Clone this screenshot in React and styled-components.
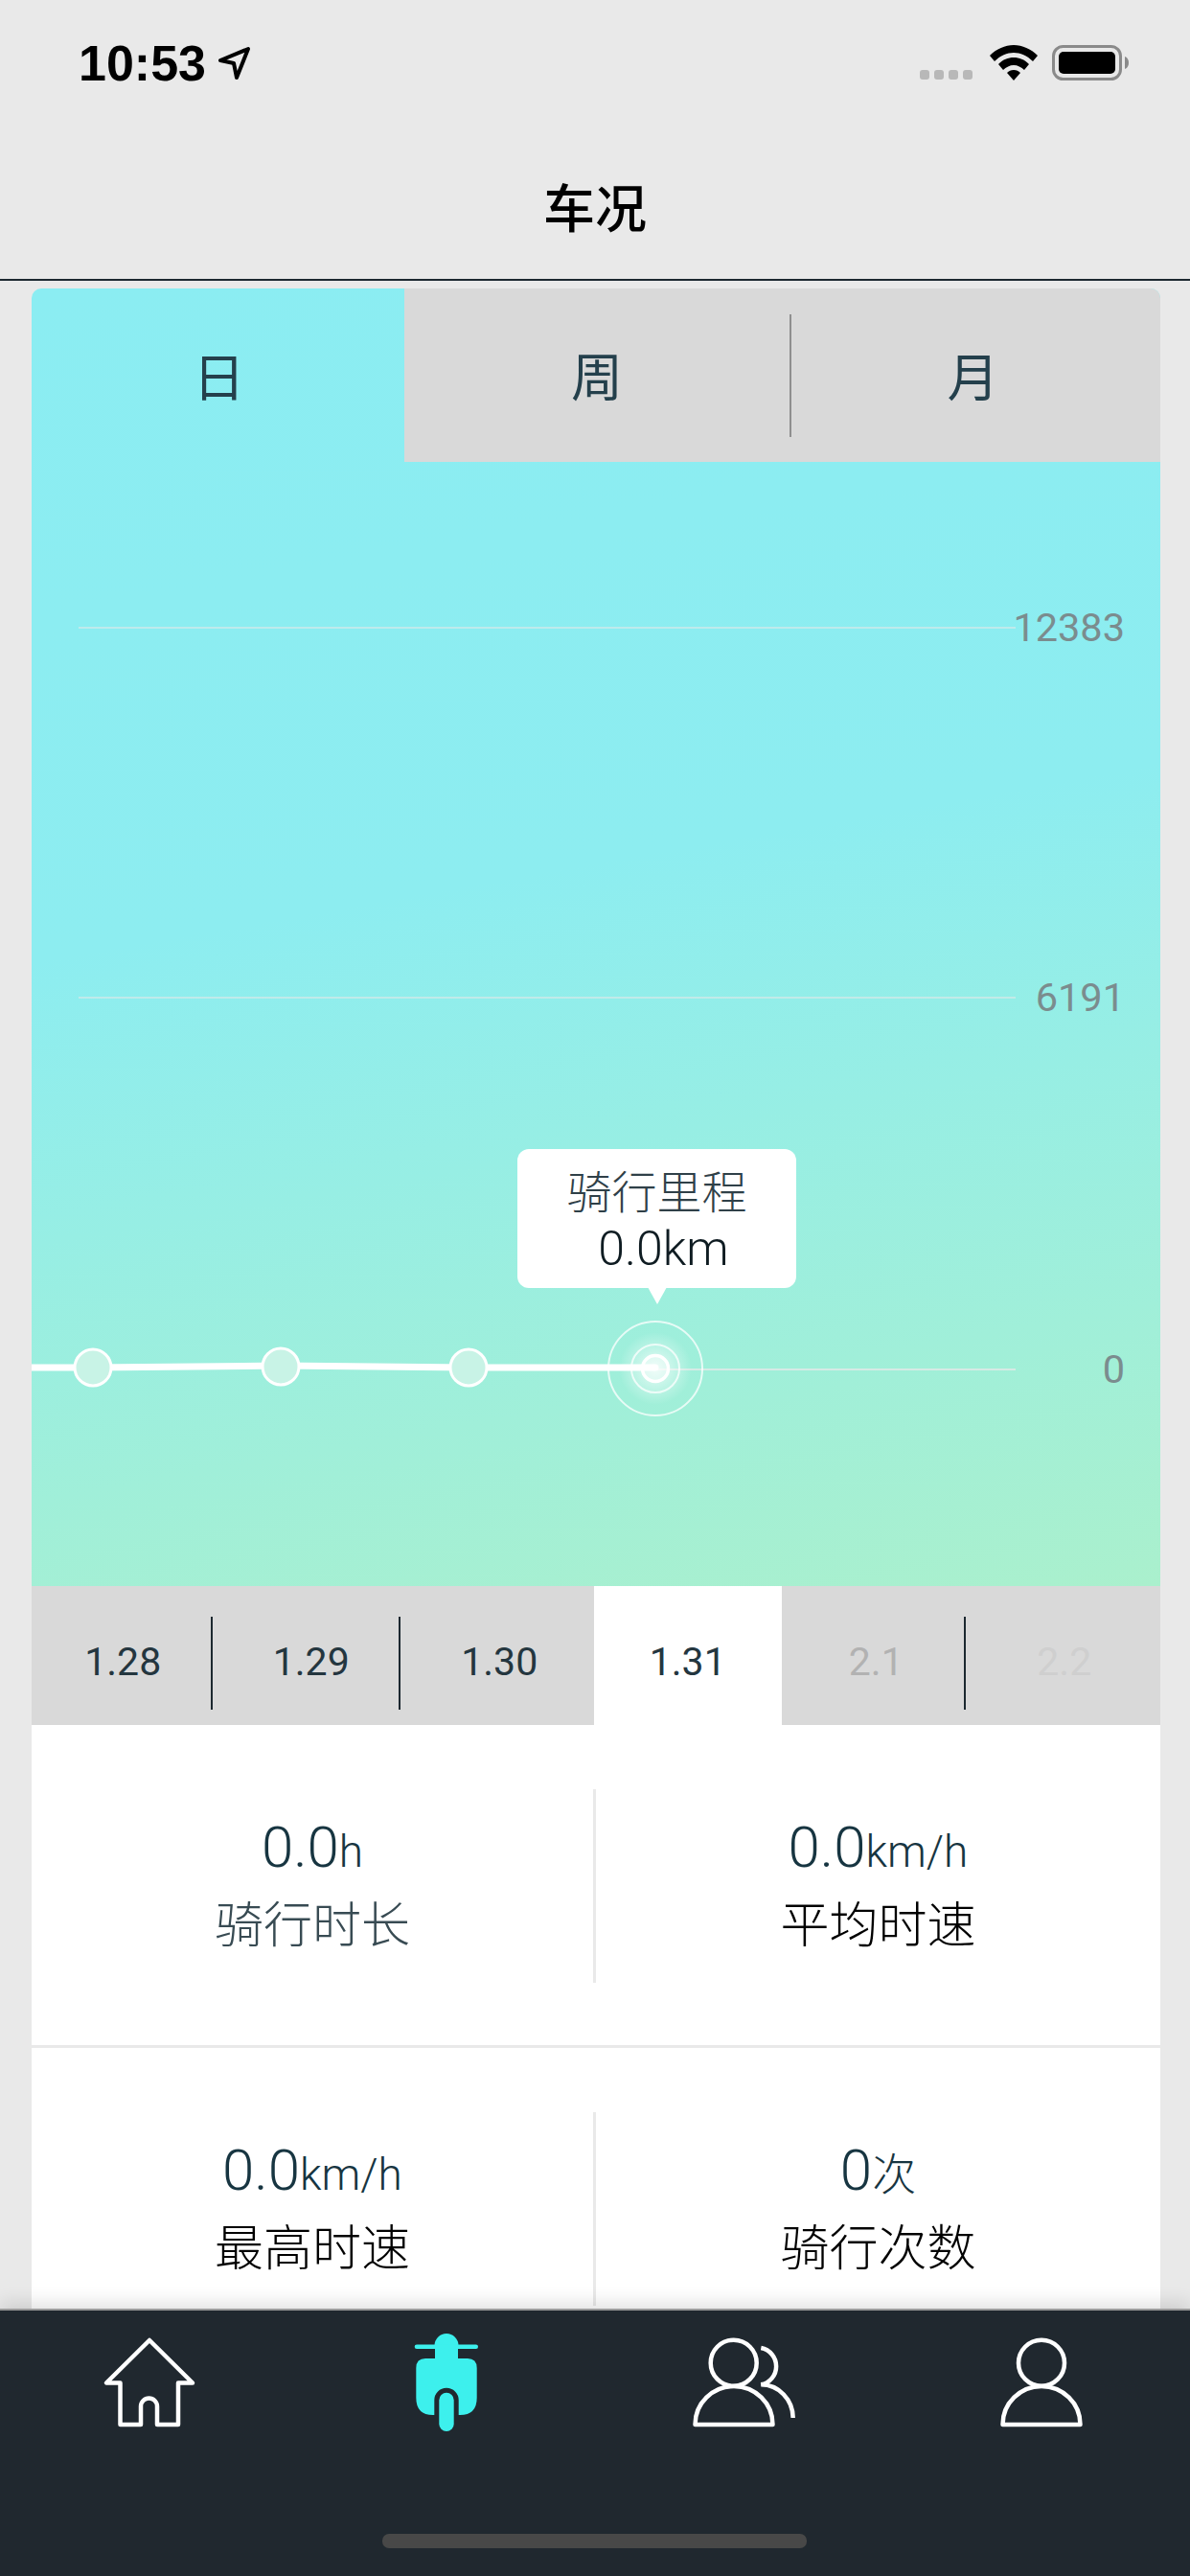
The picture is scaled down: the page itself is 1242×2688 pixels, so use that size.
import React from "react";
import styled, { createGlobalStyle } from "styled-components";

const SANS = `Roboto, "Noto Sans CJK SC", sans-serif`;

const GlobalStyle = createGlobalStyle`
  html, body {
    margin: 0;
    padding: 0;
    background: #e9e9e9;
  }
  * {
    box-sizing: border-box;
  }
`;

const dates = [
  { label: "1.28", divider: true },
  { label: "1.29", divider: true },
  { label: "1.30" },
  { label: "1.31", active: true },
  { label: "2.1", color: "#b2b2b2", divider: true },
  { label: "2.2", color: "#cfcfcf" },
];

const stats = [
  [
    { value: "0.0", unit: "h", label: "骑行时长", soft: true },
    { value: "0.0", unit: "km/h", label: "平均时速" },
  ],
  [
    { value: "0.0", unit: "km/h", label: "最高时速" },
    { value: "0", unit: "次", label: "骑行次数" },
  ],
];

const points = [
  [64, 945],
  [260, 944],
  [456, 945],
];

const App = () => {
  return (
    <Page>
      <GlobalStyle />
      <Header>
        <StatusBar>
          <Clock>
            10:53
            <svg width="34" height="36" viewBox="0 0 34 36">
              <path
                d="M2 15 L31 3 L19 33 L16 18 Z"
                fill="none"
                stroke="#000"
                strokeWidth="4"
                strokeLinejoin="round"
              />
            </svg>
          </Clock>
          <StatusIcons>
            <SignalDots>
              <i />
              <i />
              <i />
              <i />
            </SignalDots>
            <svg width="50" height="37" viewBox="0 0 50 37">
              <path d="M25 0 C34 0 43 4 50 11 L45 17 C39 11 32 8 25 8 C18 8 11 11 5 17 L0 11 C7 4 16 0 25 0 Z" />
              <path d="M25 13 C31 13 36 15 41 20 L36 26 C33 23 29 21 25 21 C21 21 17 23 14 26 L9 20 C14 15 19 13 25 13 Z" />
              <path d="M25 26 C28 26 30 27 32 29 L25 37 L18 29 C20 27 22 26 25 26 Z" />
            </svg>
            <svg width="80" height="37" viewBox="0 0 80 37">
              <rect x="1.5" y="1.5" width="70" height="34" rx="10" fill="none" stroke="#8a8a8a" strokeWidth="3" />
              <rect x="7" y="7" width="59" height="23" rx="5" fill="#000" />
              <path d="M76 12 C79 13 80 16 80 18.500 C80 21 79 24 76 25 Z" fill="#8a8a8a" />
            </svg>
          </StatusIcons>
        </StatusBar>
        <Title>车况</Title>
      </Header>

      <Main>
        <Card>
          <Tabs>
            <Tab $active>日</Tab>
            <Tab>周</Tab>
            <Tab $divider $shift>
              月
            </Tab>
          </Tabs>

          <Chart>
            <ChartSvg viewBox="0 0 1178 1173">
              <defs>
                <radialGradient id="glow">
                  <stop offset="0" stopColor="#fff" stopOpacity="0.75" />
                  <stop offset="1" stopColor="#fff" stopOpacity="0" />
                </radialGradient>
              </defs>
              <line x1="49" y1="173" x2="1027" y2="173" stroke="#e8e8e8" strokeOpacity="0.55" strokeWidth="2" />
              <line x1="49" y1="559" x2="1027" y2="559" stroke="#e8e8e8" strokeOpacity="0.55" strokeWidth="2" />
              <line x1="651" y1="947" x2="1027" y2="947" stroke="#e8e8e8" strokeOpacity="0.75" strokeWidth="2" />
              <AxisText x="1141" y="187">12383</AxisText>
              <AxisText x="1141" y="573">6191</AxisText>
              <AxisText x="1141" y="961">0</AxisText>

              <circle cx="651" cy="946" r="38" fill="url(#glow)" />
              <circle cx="651" cy="946" r="49" fill="none" stroke="#fff" strokeOpacity="0.75" strokeWidth="2" />
              <circle cx="651" cy="946" r="25" fill="none" stroke="#fff" strokeOpacity="0.75" strokeWidth="2" />
              <circle cx="651" cy="946" r="13.500" fill="#fff" fillOpacity="0.35" stroke="#fff" strokeWidth="3.500" />
              <polyline
                points="0,945 64,945 260,943 456,945 651,945"
                fill="none"
                stroke="#fff"
                strokeWidth="7"
                strokeLinecap="round"
              />
              {points.map(([x, y]) => (
                <g key={x}>
                  <circle cx={x} cy={y} r="19" fill="#c8f3e6" stroke="#fff" strokeWidth="3" />
                </g>
              ))}
            </ChartSvg>

            <Tooltip>
              <TooltipLabel>骑行里程</TooltipLabel>
              <TooltipValue>0.0km</TooltipValue>
            </Tooltip>
          </Chart>

          <DateStrip>
            {dates.map((d) => (
              <DateItem key={d.label} $active={d.active} $color={d.color} $divider={d.divider}>
                {d.label}
              </DateItem>
            ))}
          </DateStrip>

          <Stats>
            {stats.map((row, i) => (
              <StatRow key={i}>
                {row.map((s) => (
                  <Stat key={s.label}>
                    <StatValue>
                      {s.value}
                      <small>{s.unit}</small>
                    </StatValue>
                    <StatLabel $soft={s.soft}>{s.label}</StatLabel>
                  </Stat>
                ))}
              </StatRow>
            ))}
          </Stats>
        </Card>
      </Main>

      <TabBar>
        <TabBarItem>
          <svg width="120" height="110" viewBox="0 0 120 110">
            <IconPath d="M61 12 L16 56.500 H30.500 V100 H52 V81 A8.500 8.500 0 0 1 69 81 V100 H91 V56.500 H106 Z" />
          </svg>
        </TabBarItem>
        <TabBarItem>
          <svg width="120" height="110" viewBox="0 0 120 110" fill="#3df0ed">
            <circle cx="60" cy="17.500" r="12.500" />
            <rect x="26.700" y="16.500" width="66.300" height="4.500" rx="2.250" />
            <rect x="48" y="20" width="24" height="14" />
            <path d="M38 31 H82 Q91.700 31 91.700 41 V72 Q91.700 90 74 90 H72.700 V74.400 A12.700 12.700 0 0 0 47.300 74.400 V90 H46 Q28.300 90 28.300 72 V41 Q28.300 31 38 31 Z" />
            <rect x="52.300" y="66.700" width="15.400" height="40.300" rx="7.700" />
          </svg>
        </TabBarItem>
        <TabBarItem>
          <svg width="120" height="110" viewBox="0 0 120 110">
            <IconPath as="circle" cx="49.700" cy="35.700" r="24" />
            <IconPath d="M9.500 100 A40.500 40 0 0 1 90.500 100 Z" />
            <IconPath d="M78.300 20 A19.500 19.500 0 0 1 78.300 58.300 A33.500 35 0 0 1 111.700 93" $butt />
          </svg>
        </TabBarItem>
        <TabBarItem>
          <svg width="120" height="110" viewBox="0 0 120 110">
            <IconPath as="circle" cx="60" cy="35.700" r="24" />
            <IconPath d="M19.500 100 A40.500 40 0 0 1 100.500 100 Z" />
          </svg>
        </TabBarItem>
        <HomeIndicator />
      </TabBar>
    </Page>
  );
};

export default App;

const Page = styled.div`
  width: 1242px;
  height: 2688px;
  display: flex;
  flex-direction: column;
  overflow: hidden;
  background: #e9e9e9;
  font-family: ${SANS};
`;

const Header = styled.header`
  height: 293px;
  flex-shrink: 0;
  border-bottom: 2px solid #1c2830;
  display: flex;
  flex-direction: column;
`;

const StatusBar = styled.div`
  height: 126px;
  padding: 38px 64px 0 82px;
  display: flex;
  justify-content: space-between;
  align-items: flex-start;
`;

const Clock = styled.div`
  display: flex;
  align-items: center;
  gap: 13px;
  font-family: "Liberation Sans", sans-serif;
  font-weight: 700;
  font-size: 52px;
  line-height: 56px;
  color: #000;
`;

const StatusIcons = styled.div`
  display: flex;
  align-items: flex-end;
  padding-top: 9px;
  gap: 15px;
`;

const SignalDots = styled.div`
  display: flex;
  gap: 5px;
  margin-right: 3px;
  padding-bottom: 1px;

  i {
    display: block;
    width: 10px;
    height: 10px;
    border-radius: 3px;
    background: #b8b8b8;
  }
`;

const Title = styled.div`
  flex: 1;
  display: flex;
  justify-content: center;
  padding-top: 60px;
  font-size: 54px;
  line-height: 68px;
  font-weight: 500;
  color: #000;
`;

const Main = styled.main`
  flex: 1;
  min-height: 0;
  padding: 8px 31px 0 33px;
`;

const Card = styled.div`
  width: 1178px;
  border-radius: 10px 10px 0 0;
  overflow: hidden;
  background: linear-gradient(170deg, #8bedf2 0%, #8dedf0 45%, #aaf0cd 100%) 0 0 / 100% 1354px no-repeat;
`;

const Tabs = styled.div`
  height: 181px;
  display: grid;
  grid-template-columns: 389px 402px 387px;
`;

const Tab = styled.div`
  position: relative;
  display: flex;
  justify-content: center;
  align-items: center;
  background: ${(p) => (p.$active ? "transparent" : "#d9d9d9")};
  color: #24404c;
  font-size: 54px;
  font-weight: 400;
  padding-left: ${(p) => (p.$active ? "2px" : "0")};
  padding-right: ${(p) => (p.$shift ? "4px" : "0")};
  padding-bottom: 3px;

  ${(p) =>
    p.$divider &&
    `&::before {
      content: "";
      position: absolute;
      left: 0;
      top: 27px;
      height: 128px;
      width: 1.5px;
      background: #8f8f8f;
    }`}
`;

const Chart = styled.div`
  position: relative;
  height: 1173px;
`;

const ChartSvg = styled.svg`
  position: absolute;
  inset: 0;
  width: 100%;
  height: 100%;
`;

const AxisText = styled.text`
  font-family: ${SANS};
  font-size: 41.500px;
  font-weight: 400;
  fill: #7b8c8e;
  text-anchor: end;
`;

const Tooltip = styled.div`
  position: absolute;
  left: 507px;
  top: 717px;
  width: 291px;
  height: 145px;
  border-radius: 12px;
  background: #fff;
  display: flex;
  flex-direction: column;
  align-items: center;
  padding-top: 17px;

  &::after {
    content: "";
    position: absolute;
    left: 50%;
    bottom: -17px;
    margin-left: -10px;
    border-style: solid;
    border-width: 18px 10px 0 10px;
    border-color: #fff transparent transparent transparent;
  }
`;

const TooltipLabel = styled.div`
  font-size: 47px;
  line-height: 58px;
  font-weight: 300;
  color: #2f4048;
`;

const TooltipValue = styled.div`
  font-size: 50px;
  line-height: 58px;
  font-weight: 300;
  color: #0f1c22;
  padding-left: 14px;
`;

const DateStrip = styled.div`
  height: 145px;
  margin-left: -3px;
  display: grid;
  grid-template-columns: repeat(6, 196.5px);
  background: #d9d9d9;
`;

const DateItem = styled.div`
  position: relative;
  display: flex;
  justify-content: center;
  align-items: center;
  padding-top: 12px;
  background: ${(p) => (p.$active ? "#fff" : "transparent")};
  color: ${(p) => p.$color || "#24363f"};
  font-size: 41px;
  font-weight: 400;

  ${(p) =>
    p.$divider &&
    `&::after {
      content: "";
      position: absolute;
      right: 5px;
      top: 32px;
      height: 97px;
      width: 2px;
      background: #1c2830;
    }`}
`;

const Stats = styled.div`
  background: #fff;
`;

const StatRow = styled.div`
  height: 337px;
  padding: 67px 0 65px;
  border-bottom: 3px solid #e9e9e9;
  display: grid;
  grid-template-columns: 586px 1fr;
`;

const Stat = styled.div`
  display: flex;
  flex-direction: column;
  align-items: center;
  padding-top: 24px;

  & + & {
    border-left: 3px solid #e9e9e9;
  }
`;

const StatValue = styled.div`
  font-size: 60px;
  line-height: 74px;
  font-weight: 300;
  color: #173541;

  small {
    font-size: 46px;
  }
`;

const StatLabel = styled.div`
  margin-top: 6px;
  font-size: 51px;
  line-height: 70px;
  font-weight: 300;
  color: ${(p) => (p.$soft ? "#384b53" : "#000")};
`;

const TabBar = styled.nav`
  position: relative;
  height: 279px;
  flex-shrink: 0;
  padding-top: 19px;
  display: grid;
  grid-template-columns: repeat(4, 1fr);
  align-items: start;
  background: #20282f;
  border-top: 2px solid #9a9a9a;
  box-shadow: 0 -6px 18px rgba(0, 0, 0, 0.12);
`;

const TabBarItem = styled.div`
  display: flex;
  justify-content: center;
`;

const IconPath = styled.path`
  fill: none;
  stroke: #fff;
  stroke-width: 4.5;
  stroke-linejoin: ${(p) => (p.$butt ? "miter" : "round")};
`;

const HomeIndicator = styled.div`
  position: absolute;
  left: 399px;
  bottom: 29px;
  width: 443px;
  height: 15px;
  border-radius: 7px;
  background: #484848;
`;
